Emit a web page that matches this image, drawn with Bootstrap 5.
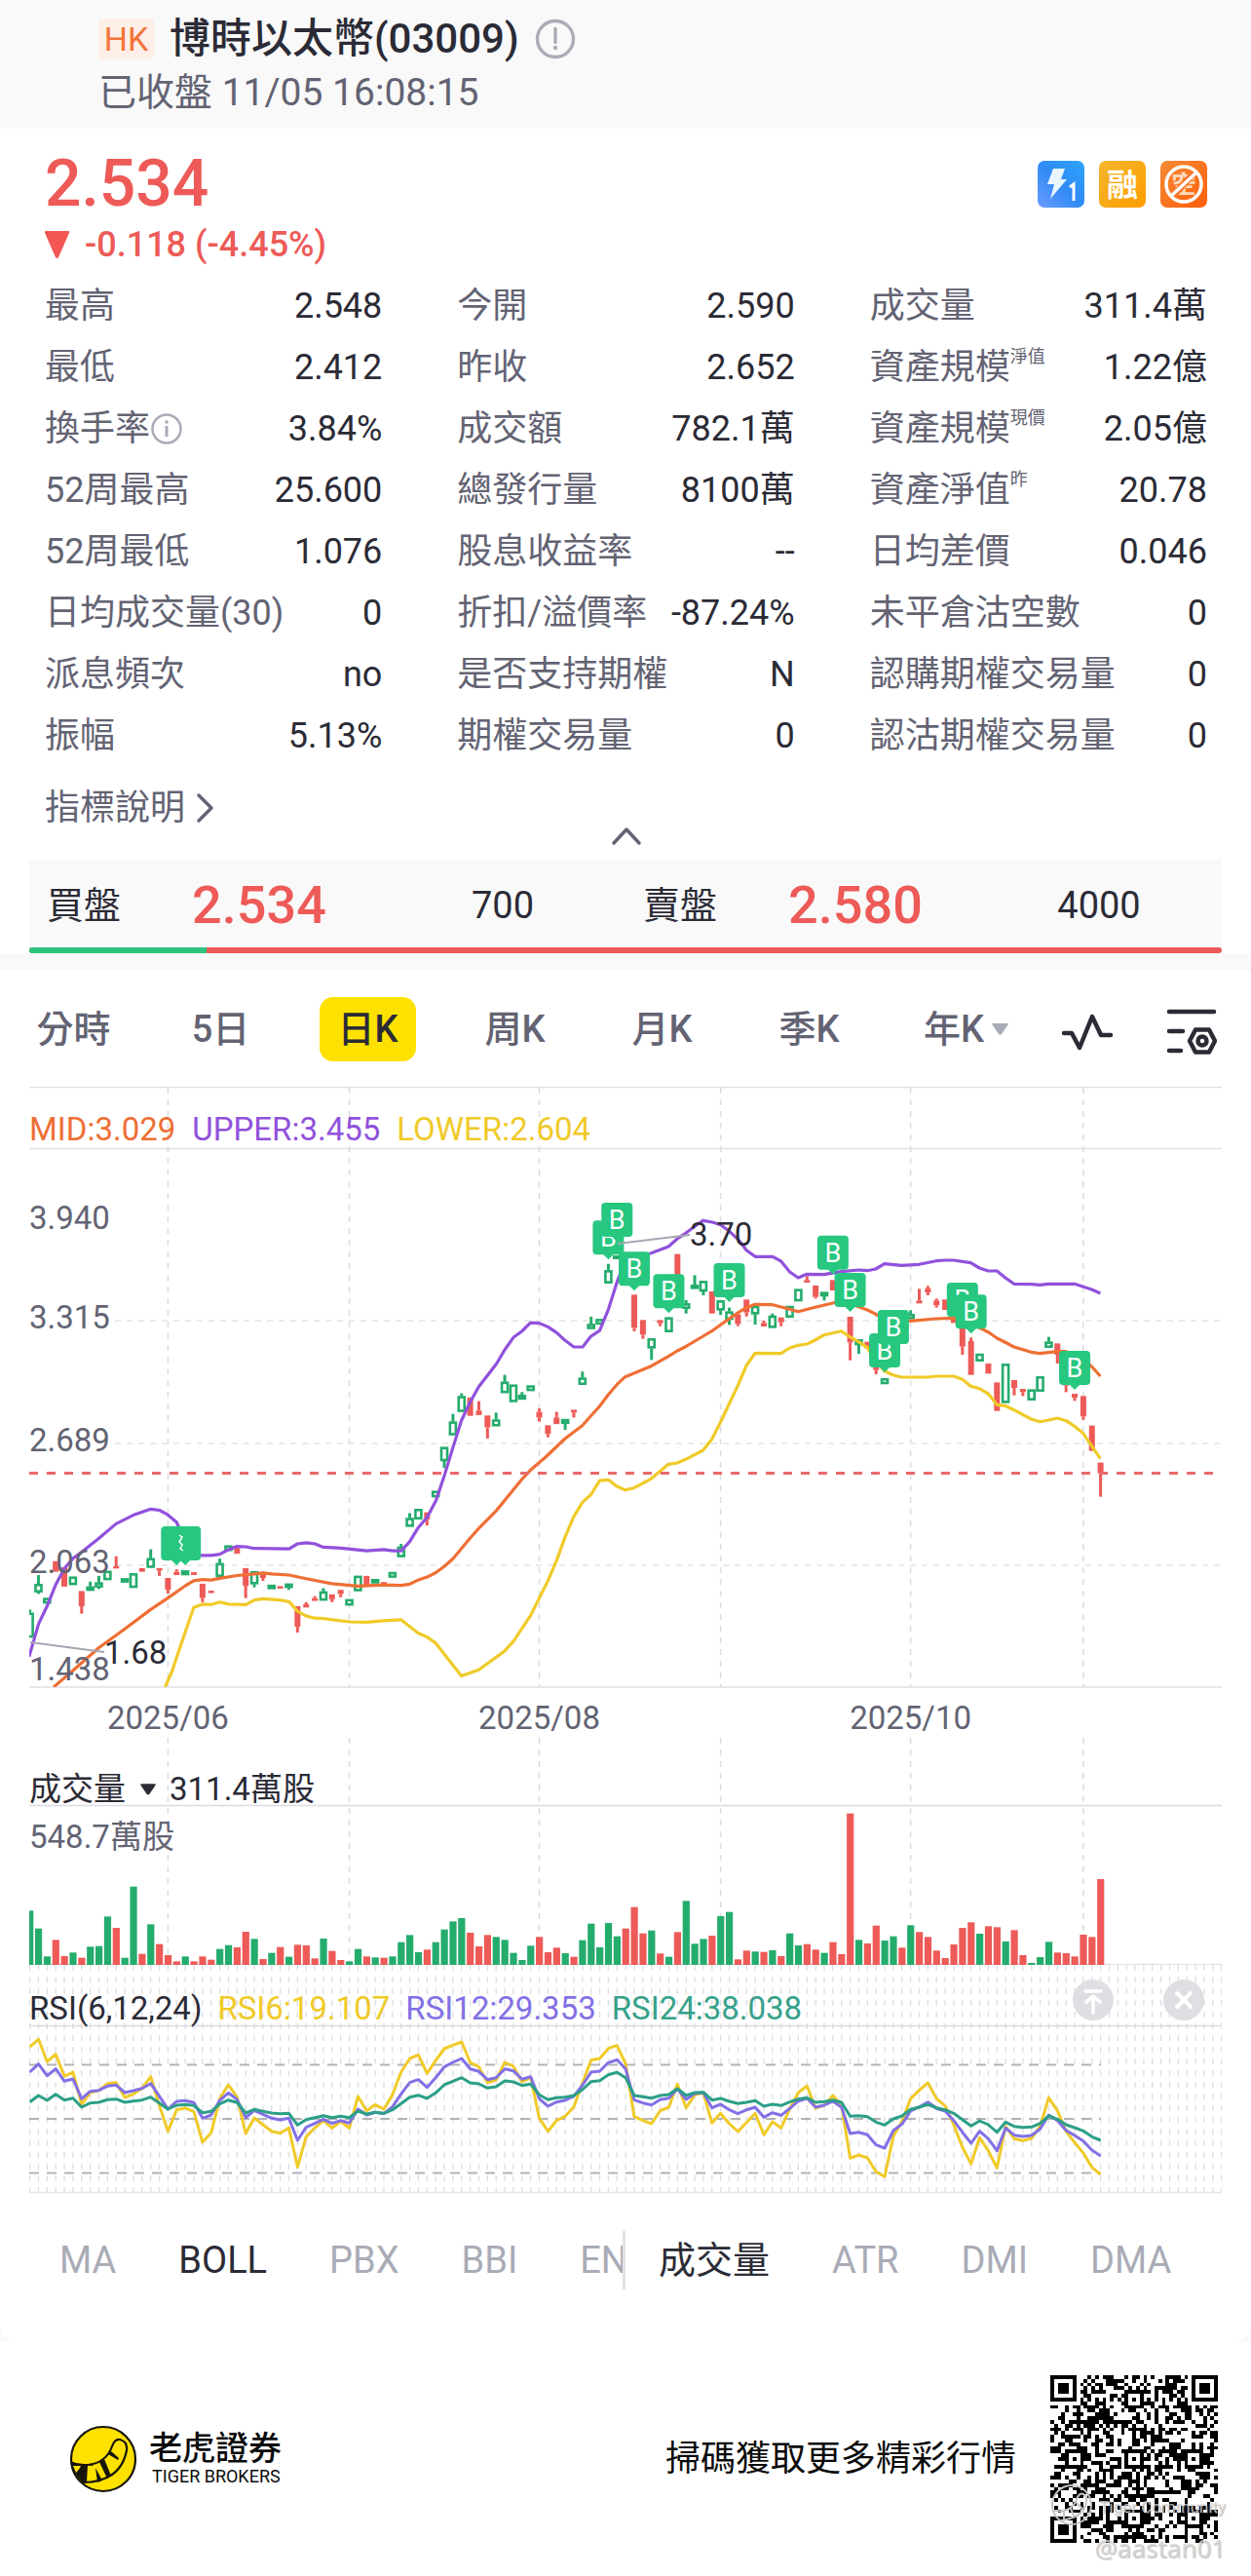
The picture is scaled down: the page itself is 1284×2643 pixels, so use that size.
<!DOCTYPE html>
<html lang="zh-Hant">
<head>
<meta charset="utf-8">
<meta name="viewport" content="width=device-width, initial-scale=1">
<title>博時以太幣(03009)</title>
<link rel="stylesheet" href="https://cdn.jsdelivr.net/npm/bootstrap@5.3.0/dist/css/bootstrap.min.css">
<style>
:root{--ink:#2b2b36;--soft:#636373;--mute:#a9abb6;--down:#ed5a57;--up:#24ac6c;--band:#f9f9f9;--line:#e3e3e5}
body{font-family:Roboto,"Noto Sans CJK TC",sans-serif;color:var(--ink);background:#fff;font-size:36px;line-height:50px}
button{font:inherit;color:inherit;background:none;border:0;padding:0}
svg{display:block}
.chart-art{width:100%;height:auto}
.top-bar{background:var(--band);padding:10px 101px 12px}
.name-line{height:60px;font-size:42px;line-height:60px;font-weight:500;margin:0}
.market-tag{font-size:34px;font-weight:400;line-height:42px;width:57px;border-radius:4px;background:#fdeee7;color:#f3743a;text-align:center}
.time-line{font-size:39px;color:var(--soft)}
.quote{padding:22px 45px 0 46px}
.last-price{font-size:66px;line-height:70px;font-weight:500;color:var(--down)}
.change-line{line-height:54px;font-weight:500;color:var(--down);font-size:36px}
.badges{gap:15px;padding-top:11px}
.stats{display:grid;grid-template-columns:repeat(3,1fr);column-gap:77px;padding-top:4px}
.stats dl{margin:0}
.stats dl>div{display:flex;justify-content:space-between;align-items:center;height:63px;white-space:nowrap}
.stats dt{font-weight:400;color:var(--soft);display:flex;align-items:center}
.stats dd{margin:0}
.tiny-note{font-size:18px;line-height:20px;align-self:flex-start;margin-top:4px}
.help-link{color:var(--soft);text-decoration:none;line-height:44px;margin-top:21px;width:max-content}
.fold-row{height:31px}
.fold-row svg{margin-top:-3px}
.side-pad{padding-left:30px;padding-right:30px}
.depth{background:var(--band);height:90px;padding-top:4px;display:grid;grid-template-columns:112fr 248fr 252fr 112fr 248fr 252fr;align-items:center;text-align:center;font-size:38px}
.depth strong{font-size:54px;font-weight:500;color:var(--down)}
.ratio{height:6px;border-radius:3px;background:var(--down)}
.ratio .progress-bar{background:#2ec27e}
.gap-band{height:18px;background:var(--band)}
.periods{display:grid;grid-template-columns:repeat(7,151fr) 117fr 98fr;padding:27px 12px 26px 0;justify-items:center;font-size:38px;line-height:66px;font-weight:500;color:var(--soft)}
.periods button{height:66px}
.periods .picked{background:#ffe100;color:var(--ink);border-radius:14px;padding:0 18px}
.periods svg{display:inline-block}
.year-tab{padding-left:20px}
.layered{display:grid}
.layered>*{grid-area:1/1}
.legend-row{display:flex;gap:17px;font-size:33px;line-height:62px;align-self:start;position:relative;white-space:nowrap}
.boll-row{padding-top:13px}
.c-mid{color:#ef6f35}.c-upper{color:#9151dc}.c-lower{color:#f0ca28}
.c-r12{color:#8370e6}.c-r24{color:#36a18a}
.vol-row{padding-top:28px;line-height:50px;gap:14px}
.vol-row svg{margin-left:15px}
.vol-max{color:var(--soft);line-height:48px;font-size:33px}
.rsi-row{padding-top:14px;gap:16px}
.rsi-tools{justify-self:end;align-self:start;display:flex;gap:51px;padding:15px 18px 0 0;position:relative}
.art-label{font-family:Roboto,sans-serif;font-size:33px}
.indicators{display:grid;grid-template-columns:1fr 1fr;font-size:38px;line-height:60px;color:var(--mute);padding:33px 0 54px}
.indicators>div{display:flex;gap:64px;overflow:hidden;white-space:nowrap}
.first-set{border-right:3px solid #e3e3e6;padding-left:61px}
.second-set{padding-left:34px}
.indicators .picked{color:var(--ink)}
.sheet-wrap{background:var(--band)}
.sheet{background:#fff;border-radius:0 0 18px 18px}
.foot{height:240px;padding:0 34px 0 71px;color:#0b0b0b}
.brand-zh{font-size:34px;line-height:36px;font-weight:500}
.brand-en{font-size:18px;line-height:22px;padding-left:3px}
.scan-call{margin-right:35px}
.scan-box{position:relative}
.stamp{position:absolute;color:#d6d6d6cc;text-shadow:1px 1px 1px #8888;white-space:nowrap}
.stamp-a{right:-8px;top:122px;font-size:17px;line-height:26px}
.stamp-b{right:-8px;top:160px;font-size:26px;line-height:34px;font-family:"Noto Sans",sans-serif}
.stamp-logo{position:absolute;left:0;top:111px}
</style>
</head>
<body>
<header class="top-bar">
  <h1 class="name-line d-flex align-items-center">
    <span class="market-tag">HK</span><span class="ms-3 me-3">博時以太幣(03009)</span>
    <button aria-label="資訊"><svg width="42" height="42" viewBox="0 0 42 42" fill="none" stroke="#aaacb6" stroke-width="3.4"><circle cx="21" cy="21" r="18.5"/><path d="M21 10.500v14" stroke-linecap="round"/><circle cx="21" cy="30" r="2.200" fill="#aaacb6" stroke="none"/></svg></button>
  </h1>
  <div class="time-line">已收盤 11/05 16:08:15</div>
</header>

<main>
<section class="quote">
  <div class="d-flex justify-content-between align-items-start">
    <div class="last-price">2.534</div>
    <div class="badges d-flex">
      <svg width="48" height="48" viewBox="0 0 48 48"><defs><linearGradient id="gb" x1="0" y1="1" x2="1" y2="0"><stop offset="0" stop-color="#6b9bff"/><stop offset=".5" stop-color="#2f8bf5"/><stop offset="1" stop-color="#2ea4fb"/></linearGradient><linearGradient id="gy" x1="0" y1="0" x2="1" y2="1"><stop offset="0" stop-color="#f3b62c"/><stop offset="1" stop-color="#ff9d00"/></linearGradient><linearGradient id="go" x1="0" y1="0" x2="1" y2="1"><stop offset="0" stop-color="#f58a35"/><stop offset="1" stop-color="#ff5f0a"/></linearGradient></defs><rect width="48" height="48" rx="7" fill="url(#gb)"/><path d="M16 8h12l-4 11h6L13 39l4-15h-7z" fill="#e9f6ff"/><path d="M33 27l4-3v17" stroke="#fff" stroke-width="3" fill="none"/></svg>
      <svg width="48" height="48" viewBox="0 0 48 48"><rect width="48" height="48" rx="7" fill="url(#gy)"/><text x="24" y="36" text-anchor="middle" font-size="32" font-weight="700" fill="#fff" font-family="Noto Sans CJK TC">融</text></svg>
      <svg width="48" height="48" viewBox="0 0 48 48"><rect width="48" height="48" rx="7" fill="url(#go)"/><text x="24" y="33" text-anchor="middle" font-size="25" font-weight="700" fill="#ffd9b8" font-family="Noto Sans CJK TC">空</text><path d="M36 11L12 37" stroke="#f8742a" stroke-width="7"/><circle cx="24" cy="24" r="18" fill="none" stroke="#fff" stroke-width="3.500"/><path d="M37 12L11 36" stroke="#fff" stroke-width="3.500"/></svg>
    </div>
  </div>
  <div class="change-line d-flex align-items-center"><svg class="me-3" width="25" height="28" viewBox="0 0 25 28"><path d="M1 0h23q2 0 1 2L14 27q-1.500 2-3 0L0 2q-1-2 1-2z" fill="#f25753"/></svg>-0.118 (-4.45%)</div>
  <div class="stats">
    <dl>
      <div><dt>最高</dt><dd>2.548</dd></div>
      <div><dt>最低</dt><dd>2.412</dd></div>
      <div><dt>換手率<svg width="34" height="34" viewBox="0 0 34 34" fill="none" stroke="#a9abb6" stroke-width="2.500"><circle cx="17" cy="17" r="14.500"/><path d="M17 14v11" stroke-width="3"/><circle cx="17" cy="10" r="1.800" fill="#a9abb6" stroke="none"/></svg></dt><dd>3.84%</dd></div>
      <div><dt>52周最高</dt><dd>25.600</dd></div>
      <div><dt>52周最低</dt><dd>1.076</dd></div>
      <div><dt>日均成交量(30)</dt><dd>0</dd></div>
      <div><dt>派息頻次</dt><dd>no</dd></div>
      <div><dt>振幅</dt><dd>5.13%</dd></div>
    </dl>
    <dl>
      <div><dt>今開</dt><dd>2.590</dd></div>
      <div><dt>昨收</dt><dd>2.652</dd></div>
      <div><dt>成交額</dt><dd>782.1萬</dd></div>
      <div><dt>總發行量</dt><dd>8100萬</dd></div>
      <div><dt>股息收益率</dt><dd>--</dd></div>
      <div><dt>折扣/溢價率</dt><dd>-87.24%</dd></div>
      <div><dt>是否支持期權</dt><dd>N</dd></div>
      <div><dt>期權交易量</dt><dd>0</dd></div>
    </dl>
    <dl>
      <div><dt>成交量</dt><dd>311.4萬</dd></div>
      <div><dt>資產規模<span class="tiny-note">淨值</span></dt><dd>1.22億</dd></div>
      <div><dt>資產規模<span class="tiny-note">現價</span></dt><dd>2.05億</dd></div>
      <div><dt>資產淨值<span class="tiny-note">昨</span></dt><dd>20.78</dd></div>
      <div><dt>日均差價</dt><dd>0.046</dd></div>
      <div><dt>未平倉沽空數</dt><dd>0</dd></div>
      <div><dt>認購期權交易量</dt><dd>0</dd></div>
      <div><dt>認沽期權交易量</dt><dd>0</dd></div>
    </dl>
  </div>
  <a href="#" class="help-link d-flex align-items-center">指標說明<svg class="ms-2" width="24" height="32" viewBox="0 0 24 32" fill="none" stroke="#636373" stroke-width="3.500" stroke-linecap="round" stroke-linejoin="round"><path d="M6 3l13 13L6 29"/></svg></a>
  <div class="fold-row text-center"><button class="d-block mx-auto" aria-label="收起"><svg width="34" height="20" viewBox="0 0 34 20" fill="none" stroke="#636373" stroke-width="3.500" stroke-linecap="round" stroke-linejoin="round"><path d="M4 17L17 3l13 14"/></svg></button></div>
</section>

<section class="side-pad">
  <div class="depth"><span>買盤</span><strong>2.534</strong><span>700</span><span>賣盤</span><strong>2.580</strong><span>4000</span></div>
  <div class="progress ratio"><div class="progress-bar" style="width:14.9%"></div></div>
</section>
<div class="gap-band"></div>

<div class="sheet-wrap"><div class="sheet">
<nav class="periods" aria-label="週期">
  <button>分時</button><button>5日</button><button class="picked">日K</button><button>周K</button><button>月K</button><button>季K</button>
  <button class="year-tab d-flex align-items-center">年K<svg class="ms-2" width="17" height="12" viewBox="0 0 17 12"><path d="M1 0h15q1 0 .5 1.500L10 11q-1.500 1.500-3 0L.5 1.500Q0 0 1 0z" fill="#a9abb6"/></svg></button>
  <button aria-label="走勢"><svg width="54" height="38" viewBox="0 0 54 38" fill="none" stroke="#2b2b36" stroke-width="4.500" stroke-linecap="round" stroke-linejoin="round"><path d="M3 20h8l8 15L32 3l9 19h10"/></svg></button>
  <button aria-label="設定"><svg width="52" height="50" viewBox="0 0 52 50" fill="none" stroke="#2b2b36" stroke-width="4.500" stroke-linecap="round" stroke-linejoin="round"><path d="M3 4h46M3 24h14M3 44h12M30 22.500h14l6 11.500-6 11.500H30L24 34z"/><circle cx="37" cy="34" r="4.500"/></svg></button>
</nav>

<section class="side-pad">
  <div class="layered">
    <svg id="kline" class="chart-art" viewBox="30 1115 1224 668" role="img" aria-label="日K"></svg>
    <div class="legend-row boll-row"><span class="c-mid">MID:3.029</span><span class="c-upper">UPPER:3.455</span><span class="c-lower">LOWER:2.604</span></div>
  </div>
  <div class="layered">
    <svg id="volume" class="chart-art" viewBox="30 1783 1224 233" role="img" aria-label="成交量"></svg>
    <div class="position-relative align-self-start">
      <div class="legend-row vol-row align-items-center"><button class="d-flex align-items-center">成交量<svg width="16" height="12" viewBox="0 0 17 12"><path d="M1 0h15q1 0 .5 1.500L10 11q-1.500 1.500-3 0L.5 1.500Q0 0 1 0z" fill="#2b2b36"/></svg></button><span>311.4萬股</span></div>
      <div class="vol-max">548.7萬股</div>
    </div>
  </div>
  <div class="layered">
    <svg id="rsi" class="chart-art" viewBox="30 2016 1224 240" role="img" aria-label="RSI"></svg>
    <div class="legend-row rsi-row"><span>RSI(6,12,24)</span><span class="c-lower">RSI6:19.107</span><span class="c-r12">RSI12:29.353</span><span class="c-r24">RSI24:38.038</span></div>
    <div class="rsi-tools">
      <button aria-label="上移"><svg width="42" height="42" viewBox="0 0 42 42" fill="none" stroke="#fff" stroke-width="3.600" stroke-linecap="round" stroke-linejoin="round"><circle cx="21" cy="21" r="21" fill="#dedfe3" stroke="none"/><path d="M13 12h16M21 34V18M14 23l7-6 7 6"/></svg></button>
      <button aria-label="關閉"><svg width="42" height="42" viewBox="0 0 42 42" fill="none" stroke="#fff" stroke-width="4" stroke-linecap="round"><circle cx="21" cy="21" r="21" fill="#dedfe3" stroke="none"/><path d="M14 14l14 14M28 14L14 28"/></svg></button>
    </div>
  </div>
</section>

<nav class="indicators" aria-label="指標">
  <div class="first-set"><button>MA</button><button class="picked">BOLL</button><button>PBX</button><button>BBI</button><button>EN</button></div>
  <div class="second-set"><button class="picked">成交量</button><button>ATR</button><button>DMI</button><button>DMA</button></div>
</nav>
</div></div>
</main>

<footer class="foot d-flex align-items-center justify-content-between">
  <div class="d-flex align-items-center">
    <svg width="70" height="70" viewBox="0 0 70 70"><defs><clipPath id="disc"><circle cx="35" cy="35" r="33"/></clipPath></defs><circle cx="35" cy="35" r="33" fill="#ffe100"/><g clip-path="url(#disc)" stroke="#17150a" fill="none" stroke-width="2.200" stroke-linejoin="round"><path d="M1 38q8 4 18 3Q38 39 44 22q3-8 8-7 8 2 7 11Q53 58 15 59"/><path d="M1 38l14 4-1 17Q4 50 1 38zM4 42l3 7q4-4 5-7z" fill="#17150a" stroke="none"/><path d="M12 40l7 1-1 18h-5zM19 41l6-1-1 2zM27 44l7 13-5 2zM31 38l5-3 7 17-4 3zM40 30l3-3 8 7-1 2z" fill="#17150a" stroke="none"/></g><circle cx="35" cy="35" r="33" fill="none" stroke="#17150a" stroke-width="2.200"/></svg>
    <div class="ms-2 ps-1"><div class="brand-zh">老虎證券</div><div class="brand-en">TIGER BROKERS</div></div>
  </div>
  <div class="d-flex align-items-center">
    <div class="scan-call">掃碼獲取更多精彩行情</div>
    <div class="scan-box">
      <svg id="scan" width="172" height="172" viewBox="0 0 45 45" shape-rendering="crispEdges" role="img" aria-label="QR"></svg>
      <svg class="stamp-logo" width="44" height="44" viewBox="0 0 44 44" fill="none" stroke="#c4c4c4" stroke-width="2"><circle cx="22" cy="22" r="20"/><path d="M3 28q20 3 25-14 4-7 9 0 2 20-26 24M14 28v9M21 26l4 9M27 20l7 7"/></svg>
      <span class="stamp stamp-a">Tiger Community</span>
      <span class="stamp stamp-b">@aastan01</span>
    </div>
  </div>
</footer>

<script>
const GREEN='#24ac6c', RED='#ed5a57', STEP=8.863, X0=30.6;
const dayX=k=>X0+k*STEP;
const line=(x1,y1,x2,y2,c,w=1.5,d='')=>`<line x1="${x1}" y1="${y1}" x2="${x2}" y2="${y2}" stroke="${c}" stroke-width="${w}"${d?` stroke-dasharray="${d}"`:''}/>`;
const label=(x,y,t,c,a='start')=>`<text class="art-label" x="${x}" y="${y}" fill="${c}" text-anchor="${a}">${t}</text>`;
const poly=(pts,c,w=3.2)=>`<polyline points="${pts}" fill="none" stroke="${c}" stroke-width="${w}" stroke-linejoin="round"/>`;
const months=[16,37,59,80,102,122];
// early: first half of the season, late: second half; each has its own digitizing scale
const early=([x,y])=>[(x/2.45).toFixed(1),(1100+y/2.3758).toFixed(1)].join();
const late=([x,y])=>[(560+x/2.45).toFixed(1),(1200+y/3).toFixed(1)].join();
const pairs=s=>s.trim().split(/\s+/).map(p=>p.split(',').map(Number));
const band=(a,b)=>pairs(a).map(early).concat(pairs(b).map(late)).join(' ');

const upper=band('73,1425 97,1345 119,1300 140,1250 162,1210 184,1185 205,1170 249,1136 292,1101 335,1080 379,1065 401,1068 422,1079 444,1097 466,1145 487,1178 531,1178 553,1175 575,1164 596,1156 618,1157 640,1161 727,1162 748,1150 770,1147 792,1150 813,1158 857,1160 922,1167 965,1164 987,1167 1009,1167 1030,1145 1052,1110 1074,1085 1096,1045 1117,985 1139,915 1160,850 1182,805 1204,767 1247,713 1269,677 1291,647 1312,632 1334,611 1356,612 1378,621 1400,635 1421,654 1443,670 1465,670 1486,644 1508,630 1530,578',
 '180,344 200,285 222,275 265,257 309,237 331,213 352,196 375,175 396,157 420,162 440,170 462,190 484,215 505,248 527,268 571,268 592,282 614,315 635,333 657,322 700,323 744,314 787,309 809,311 830,306 852,290 895,295 939,292 982,281 1004,279 1026,279 1069,287 1091,303 1113,312 1135,312 1156,333 1178,352 1221,353 1243,355 1265,352 1330,352 1373,369 1395,381');
const mid=band('135,1499 184,1458 249,1403 314,1357 379,1310 422,1282 466,1252 487,1240 509,1237 531,1238 553,1234 596,1227 640,1223 661,1221 683,1223 727,1226 770,1235 835,1247 900,1253 965,1250 1009,1251 1030,1248 1052,1238 1074,1231 1096,1220 1117,1205 1139,1186 1182,1136 1204,1112 1247,1070 1312,993 1334,970',
 '0,885 49,828 92,788 115,757 136,728 158,692 179,662 200,638 265,605 309,575 331,558 352,545 396,513 418,497 440,478 484,440 505,425 527,415 571,416 614,430 635,437 678,424 722,411 744,405 765,410 787,422 809,432 830,445 852,462 873,466 917,466 982,459 1026,457 1048,465 1091,487 1113,500 1135,519 1156,532 1178,546 1221,562 1243,566 1287,560 1309,560 1352,580 1373,606 1395,636');
const lower=band('415,1499 433,1460 455,1396 487,1305 509,1297 531,1298 553,1292 575,1297 618,1298 640,1287 661,1284 705,1287 727,1291 748,1314 770,1326 792,1331 813,1332 878,1340 922,1341 965,1337 1009,1335 1052,1368 1074,1377 1096,1392 1160,1472 1204,1457 1269,1411 1291,1388 1334,1325 1378,1240 1400,1190 1421,1133 1443,1083 1465,1048 1486,1030 1508,996',
 '158,955 179,975 200,986 222,980 265,952 309,907 331,903 352,892 396,864 418,830 440,777 484,663 505,603 527,565 592,566 614,549 635,541 657,537 678,525 700,509 744,497 765,515 787,530 809,548 830,590 852,620 873,632 895,639 960,639 982,636 1026,636 1048,646 1069,667 1091,674 1113,690 1135,724 1156,727 1178,740 1221,768 1243,776 1265,771 1287,765 1309,773 1330,790 1352,812 1373,850 1395,890');

// day, body top, body bottom, wick top, wick bottom; g = rise, r = fall
const c1='g0,1318,1378,1310 g1,1248,1268,1226,1272 g2,1282,1295 r3,1192,1218 r4,1207,1254 g5,1230,1250 r6,1265,1302,,1320 g7,1254,1264,1242 g8,1244,1256,1228,1260 g9,1216,1238 r10,1204,1210,1180 g11,1234,1244 g12,1222,1257 r13,1209,1218 g14,1185,1208,1163 r15,1209,1215,,1228 r16,1233,1262,,1271 r17,1218,1226,1212 g18,1215,1226 r19,1219,1226 r20,1247,1282,,1292 r21,1264,1270 g22,1197,1230,1186 g23,1154,1167 r24,1160,1174 r25,1209,1252,,1282 g26,1217,1248,,1256 r27,1222,1233,,1240 g28,1250,1260 r29,1253,1259 g30,1247,1257,,1262 r31,1302,1352,,1366 r32,1297,1305,1292 r33,1282,1289,1277 g34,1266,1288,1258 r35,1273,1285,,1292 r36,1262,1272,,1280 g37,1285,1300 g38,1228,1265 r39,1228,1252 g40,1236,1246 r41,1243,1254 g42,1219,1232 g43,1157,1182,1150 g44,1087,1108,1075 g45,1065,1090 r46,1073,1090,,1105 g47,1021,1036 g48,914,948,,965 g49,852,885,833 g50,790,828,783 r51,793,838 r52,825,836,802 r53,837,866,,893 g54,847,863,830 g55,755,782,738 g56,762,804 g57,787,798,780 g58,764,777 r59,828,842,820,852 r60,861,882,,890 r61,842,858,828 g62,846,857,,872 r63,823,830,,842 g64,745,762,730 g65,614,626,596 g66,602,615';
const c2='g67,310,350,290 g68,265,275 r70,385,487,,498 r71,463,508,,521 g72,520,550,,586 r73,463,473,,482 g74,455,500 r75,260,340 g76,412,428,402,443 g77,355,367,325 g78,343,375,,387 r79,375,443 g80,403,433,,447 g81,437,462,425,478 r82,445,475,,482 r83,400,440,,452 g84,420,445,,477 r85,472,483,465 g86,450,487,443 r87,455,470,,482 g88,420,455 g89,368,405 r90,340,348,328 r91,357,392,,397 g92,377,390,,403 r93,340,372 r95,453,532,,587 g96,523,540,,567 r97,530,550 r98,600,617,,630 g99,643,660 g102,445,460,433 r103,403,412,367 r104,365,378,358,387 r105,403,418,397,425 r106,400,432 r107,455,472 r108,485,545,,570 r109,528,632,517 g110,567,590 r111,597,628 r112,655,743 g113,598,718 r114,648,672,,695 r115,675,685,,697 g116,677,710 g117,637,683 g118,530,548,515 r119,535,570,,597 r120,655,665,,685 r121,690,702,,712 r122,697,760,,770 r123,788,866 r124,902,935,,1007';
function candles(src,toY){
  return src.split(' ').map(s=>{
    const up=s[0]==='g',v=s.slice(1).split(','),x=dayX(+v[0]),y1=toY(+v[1]),y2=toY(+v[2]);
    const w1=v[3]?toY(+v[3]):y1,w2=v[4]?toY(+v[4]):y2,c=up?GREEN:RED;
    let out=w1<y1?line(x,w1,x,y1,c,3):'';
    if(w2>y2)out+=line(x,y2,x,w2,c,3);
    out+=up?`<rect x="${x-3}" y="${y1+1}" width="6" height="${Math.max(1,y2-y1-2)}" fill="#fff" stroke="${c}" stroke-width="2.600"/>`
           :`<rect x="${x-3}" y="${y1}" width="6" height="${y2-y1}" fill="${c}"/>`;
    return out;}).join('');
}
const tag=(k,top,t='B')=>{const x=dayX(k),y=1200+top/3;
  return `<rect x="${x-16}" y="${y}" width="32" height="35" rx="4" fill="#27c77f"/><path d="M${x-6} ${y+34}h12l-6 6z" fill="#27c77f"/><text x="${x}" y="${y+27}" text-anchor="middle" font-size="27" fill="#fff" font-family="Roboto">${t}</text>`;};

let k='';
k+=line(30,1115.5,1254,1115.5,'#e0e0e3')+line(30,1178.5,1254,1178.5,'#e0e0e3')+line(30,1731,1254,1731,'#e0e0e3');
months.forEach(m=>k+=line(dayX(m),1116,dayX(m),1731,'#dcdce0',1.5,'6 6'));
[1355,1481,1606].forEach(y=>k+=line(118,y,1254,y,'#e3e3e6',1.5,'6 6'));
k+='<clipPath id="plot"><rect x="30" y="1180" width="1224" height="551"/></clipPath><g clip-path="url(#plot)">';
k+=candles(c1,y=>1100+y/2.3758)+candles(c2,y=>1200+y/3);
k+=poly(mid,'#ef6f35')+poly(upper,'#9151dc')+poly(lower,'#f0ca28')+'</g>';
k+=line(30,1511.5,1246,1511.5,'#e8696a',3,'9 9');
[[3.940,1261],[3.315,1363],[2.689,1489],[2.063,1614],[1.438,1724]].forEach(([v,y])=>k+=label(30,y,v.toFixed(3),'#636373'));
k+=line(31,1685,107,1695,'#a5a7b2',2)+label(107,1707,'1.68','#2b2b36');
k+=tag(17,1098,'')+tag(18,1098,'')+'<path d="M184 1575l3 2-3 5 3 3-2 4 3 2" stroke="#fff" stroke-width="1.500" fill="none"/>';
[[67,157],[68,102],[70,253],[74,322],[81,288],[93,203],[95,318],[99,504],[100,432],[108,348],[109,385],[121,558]].forEach(t=>k+=tag(...t));
k+=line(634,1276,708,1267,'#a5a7b2',2)+label(708,1278,'3.70','#2b2b36');
[[16,'2025/06'],[59,'2025/08'],[102,'2025/10']].forEach(([m,t])=>k+=label(dayX(m),1774,t,'#636373','middle'));
document.getElementById('kline').innerHTML=k;

const vol='660g715g801g750r800r789g805r771g769g678g713r805g586g793r702g763r797r816r801g816r801r811r778g766g773r725r747g809r790g772r802g765r767r807r746g784r812r816g778g801r804g805r801g757g735g788g780r757g718g693g683g728r770r735r741g750g790g812g768g741r788r774r791g802r751g700g773g698g739g715r649r730r721g792r802g726r630g762g747g737r677g664g810r783r786g787r782g800r730g767g763r780r790g757r794r361r750g761r706r752g739g774r705g726r741r783r806r764r713r696r731g708r711r755g720r797r821g803g756g789r791r801r734r741r563r';
let v=line(30,1852.5,1254,1852.5,'#dcdce0')+line(30,2015.5,1254,2015.5,'#e3e3e6');
months.forEach(m=>v+=line(dayX(m),1783,dayX(m),2015,'#dcdce0',1.5,'6 6'));
[...vol.matchAll(/(\d+)([gr])/g)].forEach(([,h,c],i)=>{const t=(827-h)/3;v+=`<rect x="${dayX(i)-3.5}" y="${2016-t}" width="7.200" height="${t}" fill="${c==='g'?GREEN:RED}"/>`;});
document.getElementById('volume').innerHTML=v;

const rsi6=[270,247,316,293,361,348,447,411,405,383,380,426,415,398,362,450,530,464,458,470,564,535,430,387,425,537,489,510,530,536,520,640,547,520,497,520,500,520,423,467,448,462,418,347,306,295,352,312,276,265,255,318,332,380,372,318,330,378,365,490,530,497,484,455,382,311,306,275,266,322,485,497,507,467,456,385,458,418,412,505,475,507,531,503,475,541,501,520,462,411,391,459,450,420,450,613,603,612,655,670,545,500,430,404,381,430,452,510,580,630,550,590,643,515,553,559,552,515,427,467,530,565,597,641,663];
const rsi12=[348,323,359,338,376,369,430,407,404,391,388,411,405,398,383,422,462,438,436,442,490,480,435,412,432,488,466,478,490,495,490,558,518,506,493,506,497,505,462,480,472,476,455,415,380,371,395,365,332,318,306,338,346,371,365,338,344,370,362,430,453,440,435,422,388,348,345,319,310,338,434,443,449,433,428,400,432,414,411,458,447,464,476,464,456,487,473,481,460,437,429,456,450,438,456,537,533,541,572,582,528,508,468,455,440,460,468,497,533,567,530,553,590,520,542,546,543,523,480,497,527,543,560,588,606];
const rsi24=[440,420,435,416,434,428,456,443,441,433,431,441,437,434,425,443,462,450,448,451,473,469,446,434,442,474,463,469,474,476,475,511,494,488,482,488,484,488,468,477,472,475,464,445,425,419,429,412,387,376,365,381,384,397,393,375,378,389,385,418,433,427,425,420,402,377,374,356,349,365,420,424,428,420,417,399,420,411,410,434,429,438,445,441,436,453,447,451,440,431,427,441,439,434,441,484,482,485,502,511,492,483,463,456,448,458,464,475,494,514,498,510,533,502,515,518,517,506,483,493,510,519,529,547,558];
let r='';
for(let i=0;i<=138;i++)r+=line(dayX(i),2016,dayX(i),2249,'#dedee2',1.3,'6 6');
r+=line(30,2078.5,1254,2078.5,'#dcdce0')+line(30,2249.5,1254,2249.5,'#e3e3e6');
[2118.5,2174,2229.5].forEach(y=>r+=line(30,y,1130,y,'#b3b3b6',1.8,'10 8'));
[[rsi6,'#f0ca28'],[rsi12,'#8370e6'],[rsi24,'#2c9f88']].forEach(([d,c])=>r+=poly(d.map((y,i)=>dayX(i).toFixed(1)+','+(2010+y/3).toFixed(1)).join(' '),c,3));
document.getElementById('rsi').innerHTML=r;

// QR symbol, 45 x 45 modules
const N=45,m=[];let seed=20251;
const rnd=()=>(seed=(seed*1103515245+12345)%2147483648)/2147483648;
for(let y=0;y<N;y++){m.push([]);for(let x=0;x<N;x++)m[y].push(rnd()<.5);}
for(let i=0;i<N;i++){m[6][i]=m[i][6]=i%2===0;}
const square=(cx,cy,R,f)=>{for(let y=-R;y<=R;y++)for(let x=-R;x<=R;x++)if(m[cy+y]&&cx+x>=0&&cx+x<N)m[cy+y][cx+x]=f(Math.max(Math.abs(x),Math.abs(y)));};
[[3,3],[41,3],[3,41]].forEach(([x,y])=>square(x,y,4,d=>d<2||d===3));
[[22,6],[6,22],[22,22],[38,22],[22,38],[38,38]].forEach(([x,y])=>square(x,y,2,d=>d!==1));
document.getElementById('scan').innerHTML='<rect width="45" height="45" fill="#fff"/><path d="'+m.map((row,y)=>row.map((b,x)=>b?`M${x} ${y}h1v1h-1z`:'').join('')).join('')+'"/>';
</script>
<script src="https://cdn.jsdelivr.net/npm/bootstrap@5.3.0/dist/js/bootstrap.bundle.min.js"></script>
</body>
</html>
